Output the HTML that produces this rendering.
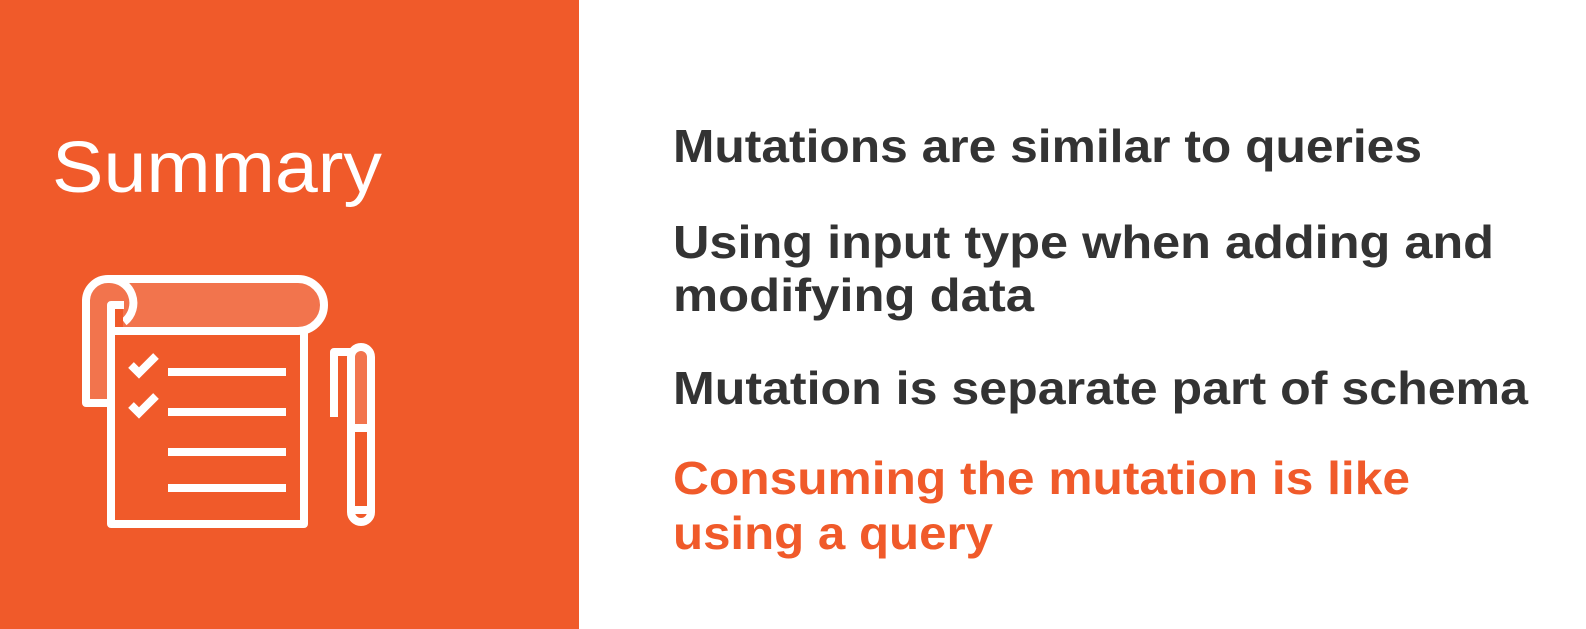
<!DOCTYPE html>
<html><head><meta charset="utf-8"><style>
html,body{margin:0;padding:0;width:1586px;height:629px;overflow:hidden;background:#fff}
svg{display:block}
</style></head><body>
<svg width="1586" height="629" viewBox="0 0 1586 629" xmlns="http://www.w3.org/2000/svg">
<rect x="0" y="0" width="579" height="629" fill="#F05A2A"/>
<text x="52" y="192" font-family="Liberation Sans, sans-serif" font-size="72" fill="#fff" textLength="330" lengthAdjust="spacingAndGlyphs">Summary</text>
<g fill="none" stroke="#fff" stroke-width="8" stroke-linejoin="round">
  <path d="M86 403 V300 A22 22 0 0 1 108 279 H298 A26 26 0 0 1 298 331 H111 V403 Z" fill="#F2744D"/>
  <path d="M111 331 V305 H124" fill="#F05A2A"/>
  <path d="M108 279 A24 24 0 0 1 124 322"/>
  <path d="M111 331 V524 H304 V331"/>
</g>
<rect x="115" y="309" width="8" height="18" fill="#F05A2A"/>
<g stroke="#fff" stroke-width="8" fill="none">
  <line x1="168" y1="372" x2="286" y2="372"/>
  <line x1="168" y1="412" x2="286" y2="412"/>
  <line x1="168" y1="452" x2="286" y2="452"/>
  <line x1="168" y1="488" x2="286" y2="488"/>
  <path d="M131 365 L139 373 L156 356"/>
  <path d="M131 405 L139 413 L156 396"/>
</g>
<g stroke="#fff" stroke-width="8" fill="none" stroke-linejoin="round">
  <path d="M351 428 V357 A10 10 0 0 1 371 357 V428 Z" fill="#F2744D"/>
  <path d="M351 428 H371 V512 A10 10 0 0 1 351 512 Z"/>
  <path d="M351 352 H334 V417"/>
  <path d="M354 510 H368"/>
</g>
<g font-family="Liberation Sans, sans-serif" font-size="46" font-weight="bold">
<text x="673" y="162" fill="#333" textLength="749" lengthAdjust="spacingAndGlyphs">Mutations are similar to queries</text>
<text x="673" y="258" fill="#333" textLength="821" lengthAdjust="spacingAndGlyphs">Using input type when adding and</text>
<text x="673" y="311" fill="#333" textLength="361" lengthAdjust="spacingAndGlyphs">modifying data</text>
<text x="673" y="404" fill="#333" textLength="855" lengthAdjust="spacingAndGlyphs">Mutation is separate part of schema</text>
<text x="673" y="494" fill="#F05A2A" textLength="737" lengthAdjust="spacingAndGlyphs">Consuming the mutation is like</text>
<text x="673" y="549" fill="#F05A2A" textLength="320" lengthAdjust="spacingAndGlyphs">using a query</text>
</g>
</svg>
</body></html>
